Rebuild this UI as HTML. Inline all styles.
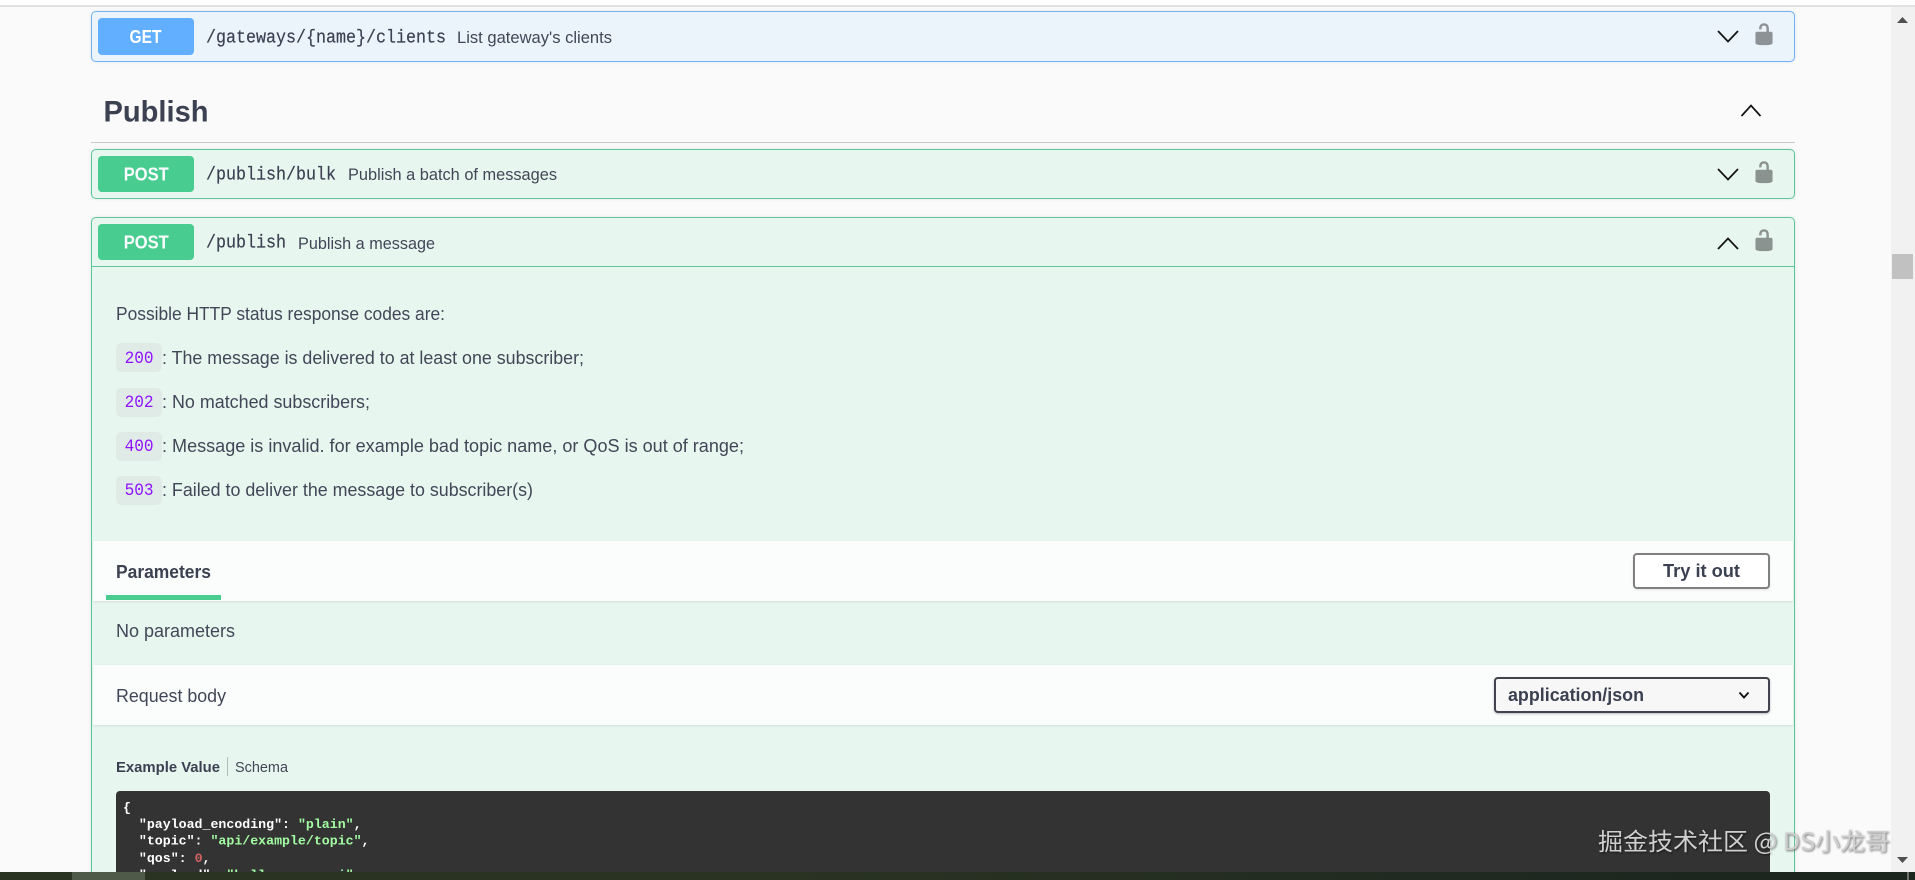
<!DOCTYPE html>
<html lang="en">
<head>
<meta charset="utf-8">
<title>Publish API</title>
<style>
html,body{margin:0;padding:0;width:1915px;height:880px;overflow:hidden;background:#fafafa;}
body{position:relative;font-family:"Liberation Sans","Noto Sans CJK SC",sans-serif;}
.a{position:absolute;box-sizing:border-box;}
.op{left:91px;width:1704px;border-radius:5px;border:1.4px solid #5cc79a;background:#e8f6f0;box-shadow:0 0 3px rgba(0,0,0,.1);}
.badge{left:98px;width:96px;border-radius:4px;background:#49cc90;}
.pill{left:116px;width:46px;height:29px;border-radius:5px;background:#e0ebe7;}
.sec{left:93px;width:1700px;background:#fbfdfc;box-shadow:0 1px 2px rgba(0,0,0,.1);}
svg{position:absolute;left:0;top:0;}
text{font-family:"Liberation Sans","Noto Sans CJK SC",sans-serif;fill:#414756;white-space:pre;}
.m{font-family:"Liberation Mono",monospace;font-size:18px;fill:#3b4151;stroke:#3b4151;stroke-width:.2px;}
.d{font-size:17px;}
.b{font-size:18px;}
.s{font-weight:700;fill:#3b4151;}
.w{fill:#fff;font-weight:700;font-size:18px;}
.c{font-family:"Liberation Mono",monospace;font-size:13.25px;font-weight:700;fill:#fff;}
.n{font-family:"Liberation Mono",monospace;font-size:17.5px;fill:#9012fe;}
</style>
</head>
<body>
<!-- top line -->
<div class="a" style="left:0;top:0;width:1915px;height:5px;background:#fff"></div>
<div class="a" style="left:0;top:5px;width:1915px;height:2px;background:#e2e2e2"></div>

<!-- scrollbar -->
<div class="a" style="left:1891px;top:7px;width:24px;height:865px;background:#f1f1f1"></div>
<div class="a" style="left:1892px;top:254px;width:21px;height:25px;background:#c1c1c1"></div>

<!-- GET -->
<div class="a op" style="top:11px;height:51px;border-color:#6fb2f5;background:#ebf3fb"></div>
<div class="a badge" style="top:18px;height:37px;background:#61affe"></div>

<!-- Publish heading rule -->
<div class="a" style="left:91px;top:142px;width:1704px;height:1px;background:#c9c9c9"></div>

<!-- POST bulk -->
<div class="a op" style="top:149px;height:50px"></div>
<div class="a badge" style="top:156px;height:36px"></div>

<!-- POST publish -->
<div class="a op" style="top:217px;height:700px"></div>
<div class="a badge" style="top:224px;height:36px"></div>
<div class="a" style="left:92px;top:266px;width:1702px;height:1.2px;background:#5cc79a"></div>

<!-- status code pills -->
<div class="a pill" style="top:343px"></div>
<div class="a pill" style="top:387.5px"></div>
<div class="a pill" style="top:431.5px"></div>
<div class="a pill" style="top:476px"></div>

<!-- white sections -->
<div class="a sec" style="top:541px;height:60px"></div>
<div class="a" style="left:106px;top:595px;width:115px;height:5px;background:#49cc90"></div>
<div class="a" style="left:1633px;top:553px;width:137px;height:36px;border:2px solid #808080;border-radius:4px;background:#fff;box-shadow:0 1px 2px rgba(0,0,0,.1)"></div>
<div class="a sec" style="top:665px;height:60px"></div>
<div class="a" style="left:1494px;top:677px;width:276px;height:36px;border:2px solid #41444e;border-radius:4px;background:#f7f7f7;box-shadow:0 1px 2px rgba(0,0,0,.25)"></div>

<!-- example divider and code block -->
<div class="a" style="left:227px;top:757px;width:1px;height:19px;background:#b5bdb9"></div>
<div class="a" style="left:116px;top:791px;width:1654px;height:100px;border-radius:4px;background:#333"></div>

<svg width="1915" height="880" viewBox="0 0 1915 880" xmlns="http://www.w3.org/2000/svg">
  <!-- scroll arrows -->
  <path d="M1897 23L1902.5 17L1908 23Z" fill="#505050"/>
  <path d="M1897 857L1908 857L1902.5 863Z" fill="#505050"/>

  <!-- header rows -->
  <text class="w" x="129.5" y="43" textLength="32" lengthAdjust="spacingAndGlyphs">GET</text>
  <text class="m" x="206" y="42.5" textLength="240" lengthAdjust="spacingAndGlyphs">/gateways/{name}/clients</text>
  <text class="d" x="457" y="43" textLength="155" lengthAdjust="spacingAndGlyphs">List gateway's clients</text>

  <text class="s" font-size="30" x="103.5" y="121.5" textLength="105" lengthAdjust="spacingAndGlyphs">Publish</text>

  <text class="w" x="123.7" y="180.5" textLength="45" lengthAdjust="spacingAndGlyphs">POST</text>
  <text class="m" x="206" y="179.5" textLength="130" lengthAdjust="spacingAndGlyphs">/publish/bulk</text>
  <text class="d" x="348" y="180" textLength="209" lengthAdjust="spacingAndGlyphs">Publish a batch of messages</text>

  <text class="w" x="123.7" y="248.5" textLength="45" lengthAdjust="spacingAndGlyphs">POST</text>
  <text class="m" x="206" y="247.5" textLength="80" lengthAdjust="spacingAndGlyphs">/publish</text>
  <text class="d" x="298" y="249" textLength="137" lengthAdjust="spacingAndGlyphs">Publish a message</text>

  <!-- chevrons -->
  <g fill="none" stroke="#111" stroke-width="1.7">
    <path d="M1718 31L1728 41.5L1738 31"/>
    <path d="M1741.5 116L1751 105.5L1760.5 116"/>
    <path d="M1718 169L1728 179.5L1738 169"/>
    <path d="M1718 249L1728 238.5L1738 249"/>
    <path d="M1739.5 692.5L1744 697.5L1748.5 692.5" stroke-width="1.8"/>
  </g>

  <!-- locks -->
  <g fill="#000" fill-opacity=".4">
    <path transform="translate(1751.8 22) scale(1.22)" d="M15.8 8H14V5.6C14 2.703 12.665 1 10 1 7.334 1 6 2.703 6 5.6V6h2v-.801C8 3.754 8.797 3 10 3c1.203 0 2 .754 2 2.199V8H4c-.553 0-1 .646-1 1.199V17c0 .549.428 1.139.951 1.307l1.197.387C5.672 18.861 6.55 19 7.1 19h5.8c.549 0 1.428-.139 1.951-.307l1.196-.387c.524-.167.953-.757.953-1.306V9.199C17 8.646 16.352 8 15.8 8z"/>
    <path transform="translate(1751.8 160) scale(1.22)" d="M15.8 8H14V5.6C14 2.703 12.665 1 10 1 7.334 1 6 2.703 6 5.6V6h2v-.801C8 3.754 8.797 3 10 3c1.203 0 2 .754 2 2.199V8H4c-.553 0-1 .646-1 1.199V17c0 .549.428 1.139.951 1.307l1.197.387C5.672 18.861 6.55 19 7.1 19h5.8c.549 0 1.428-.139 1.951-.307l1.196-.387c.524-.167.953-.757.953-1.306V9.199C17 8.646 16.352 8 15.8 8z"/>
    <path transform="translate(1751.8 228) scale(1.22)" d="M15.8 8H14V5.6C14 2.703 12.665 1 10 1 7.334 1 6 2.703 6 5.6V6h2v-.801C8 3.754 8.797 3 10 3c1.203 0 2 .754 2 2.199V8H4c-.553 0-1 .646-1 1.199V17c0 .549.428 1.139.951 1.307l1.197.387C5.672 18.861 6.55 19 7.1 19h5.8c.549 0 1.428-.139 1.951-.307l1.196-.387c.524-.167.953-.757.953-1.306V9.199C17 8.646 16.352 8 15.8 8z"/>
  </g>

  <!-- description -->
  <text class="b" x="116" y="320" textLength="329" lengthAdjust="spacingAndGlyphs">Possible HTTP status response codes are:</text>
  <text class="n" x="124.6" y="363" textLength="29" lengthAdjust="spacingAndGlyphs">200</text>
  <text class="b" x="162" y="364" textLength="422" lengthAdjust="spacingAndGlyphs">: The message is delivered to at least one subscriber;</text>
  <text class="n" x="124.6" y="407" textLength="29" lengthAdjust="spacingAndGlyphs">202</text>
  <text class="b" x="162" y="408" textLength="208" lengthAdjust="spacingAndGlyphs">: No matched subscribers;</text>
  <text class="n" x="124.6" y="451" textLength="29" lengthAdjust="spacingAndGlyphs">400</text>
  <text class="b" x="162" y="452" textLength="582" lengthAdjust="spacingAndGlyphs">: Message is invalid. for example bad topic name, or QoS is out of range;</text>
  <text class="n" x="124.6" y="495" textLength="29" lengthAdjust="spacingAndGlyphs">503</text>
  <text class="b" x="162" y="496" textLength="371" lengthAdjust="spacingAndGlyphs">: Failed to deliver the message to subscriber(s)</text>

  <!-- parameters -->
  <text class="b s" x="116" y="578" textLength="95" lengthAdjust="spacingAndGlyphs">Parameters</text>
  <text class="b s" x="1663" y="577" textLength="77" lengthAdjust="spacingAndGlyphs">Try it out</text>
  <text class="b" x="116" y="637" textLength="119" lengthAdjust="spacingAndGlyphs">No parameters</text>
  <text class="b" x="116" y="702" textLength="110" lengthAdjust="spacingAndGlyphs">Request body</text>
  <text class="b s" x="1508" y="701" textLength="136" lengthAdjust="spacingAndGlyphs">application/json</text>
  <text class="s" font-size="14.6" x="116" y="772" textLength="104" lengthAdjust="spacingAndGlyphs">Example Value</text>
  <text font-size="14.6" x="235" y="772" textLength="53" lengthAdjust="spacingAndGlyphs">Schema</text>

  <!-- code -->
  <text class="c" x="123" y="811.5">{</text>
  <text class="c" x="123" y="828" xml:space="preserve">  "payload_encoding": <tspan fill="#a2fca2">"plain"</tspan>,</text>
  <text class="c" x="123" y="844.5" xml:space="preserve">  "topic": <tspan fill="#a2fca2">"api/example/topic"</tspan>,</text>
  <text class="c" x="123" y="862" xml:space="preserve">  "qos": <tspan fill="#d36363">0</tspan>,</text>
  <text class="c" x="123" y="879" xml:space="preserve">  "payload": <tspan fill="#a2fca2">"hello emqx api"</tspan></text>

  <!-- watermark -->
  <text x="1598" y="850" font-size="24" textLength="292" lengthAdjust="spacingAndGlyphs" style="fill:#cfcfcf;filter:drop-shadow(1px 1px 1px rgba(0,0,0,.55));font-family:'Noto Sans CJK SC','Liberation Sans',sans-serif">掘金技术社区 @ DS小龙哥</text>
</svg>

<!-- bottom bar -->
<div class="a" style="left:0;top:872px;width:1915px;height:8px;background:linear-gradient(90deg,#2a3322 0,#2a3322 40%,#1c261f 90%)"></div>
<div class="a" style="left:72px;top:872px;width:73px;height:8px;background:#4f5a48"></div>
<div class="a" style="left:1907px;top:872px;width:2px;height:8px;background:#6d726e"></div>
</body>
</html>
